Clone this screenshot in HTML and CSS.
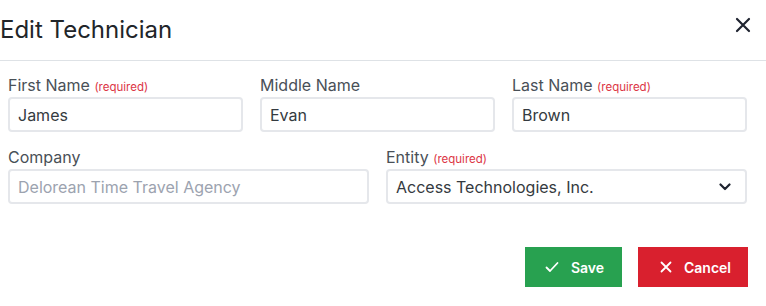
FILE: index.html
```html
<!DOCTYPE html>
<html>
<head>
<meta charset="utf-8">
<link rel="stylesheet" href="styles.css">
</head>
<body>
<div class="modal">
  <div class="modal-header">
    <h1 class="title">Edit Technician</h1>
    <button class="close" aria-label="Close">
      <svg width="16" height="16" viewBox="0 0 16 16"><path d="M2 2 L14 14 M14 2 L2 14" stroke="#1f2430" stroke-width="2.2" stroke-linecap="round"/></svg>
    </button>
  </div>
  <div class="modal-body">
    <div class="row row-3">
      <div class="field">
        <label class="label">First Name <span class="req">(required)</span></label>
        <div class="input">James</div>
      </div>
      <div class="field">
        <label class="label">Middle Name</label>
        <div class="input">Evan</div>
      </div>
      <div class="field">
        <label class="label">Last Name <span class="req">(required)</span></label>
        <div class="input">Brown</div>
      </div>
    </div>
    <div class="row row-2">
      <div class="field">
        <label class="label">Company</label>
        <div class="input placeholder">Delorean Time Travel Agency</div>
      </div>
      <div class="field">
        <label class="label">Entity <span class="req">(required)</span></label>
        <div class="input select">
          <span>Access Technologies, Inc.</span>
          <svg width="12" height="8" viewBox="0 0 12 8"><path d="M1.5 1.5 L6 6 L10.5 1.5" fill="none" stroke="#1f2430" stroke-width="2.2" stroke-linecap="round" stroke-linejoin="round"/></svg>
        </div>
      </div>
    </div>
  </div>
  <div class="modal-footer">
    <button class="btn btn-save">
      <svg width="14" height="12" viewBox="0 0 14 12"><path d="M1.5 6.5 L5 10 L12.5 2" fill="none" stroke="#fff" stroke-width="1.8" stroke-linecap="round" stroke-linejoin="round"/></svg>
      Save
    </button>
    <button class="btn btn-cancel">
      <svg width="12" height="12" viewBox="0 0 12 12"><path d="M1.5 1.5 L10.5 10.5 M10.5 1.5 L1.5 10.5" stroke="#fff" stroke-width="1.8" stroke-linecap="round"/></svg>
      Cancel
    </button>
  </div>
</div>
</body>
</html>
```
FILE: styles.css
```css
* { box-sizing: border-box; }
html, body { margin: 0; padding: 0; background: #fff; }
body {
  font-family: Inter, "Noto Sans", sans-serif;
  color: #343a40;
  width: 766px;
  height: 306px;
  overflow: hidden;
}
.modal { width: 766px; }
.modal-header {
  height: 61px;
  display: flex;
  align-items: center;
  justify-content: space-between;
  border-bottom: 1px solid #dee2e6;
  padding: 0 15px 2px 0;
}
.title {
  margin: 0;
  font-size: 24px;
  font-weight: 400;
  color: #212529;
  letter-spacing: 0;
}
.close {
  border: 0;
  background: none;
  padding: 0;
  width: 16px;
  height: 16px;
  display: flex;
  margin-top: -8px;
}
.modal-body {
  padding: 12px 19px 0 8px;
}
.row {
  display: grid;
  margin-bottom: 13px;
}
.row-3 { grid-template-columns: 235px 235px 235px; column-gap: 17px; }
.row-2 { grid-template-columns: 361px 361px; column-gap: 17px; }
.field { display: flex; flex-direction: column; }
.label {
  display: block;
  height: 24px;
  font-size: 16px;
  color: #495057;
  line-height: 24px;
}
.req { font-size: 11.5px; line-height: 1; color: #dc3545; }
.input {
  height: 35px;
  border: 2px solid #e5e7eb;
  border-radius: 4px;
  padding: 0 8px;
  font-size: 16px;
  color: #343a40;
  display: flex;
  align-items: center;
}
.placeholder { color: #9ca3af; }
.select { justify-content: space-between; padding-right: 14px; }
.modal-footer {
  display: flex;
  justify-content: flex-end;
  gap: 16px;
  padding: 30px 18px 0 0;
}
.btn {
  height: 40px;
  border: 0;
  border-radius: 0;
  color: #fff;
  font-family: Inter, "Noto Sans", sans-serif;
  font-size: 14px;
  font-weight: 600;
  display: flex;
  align-items: center;
  justify-content: center;
  gap: 12px;
}
.btn-save { background: #28a150; width: 97px; padding: 0 0 0 2px; }
.btn-cancel { background: #d9202e; width: 110px; padding: 0 0 0 5px; }
```
